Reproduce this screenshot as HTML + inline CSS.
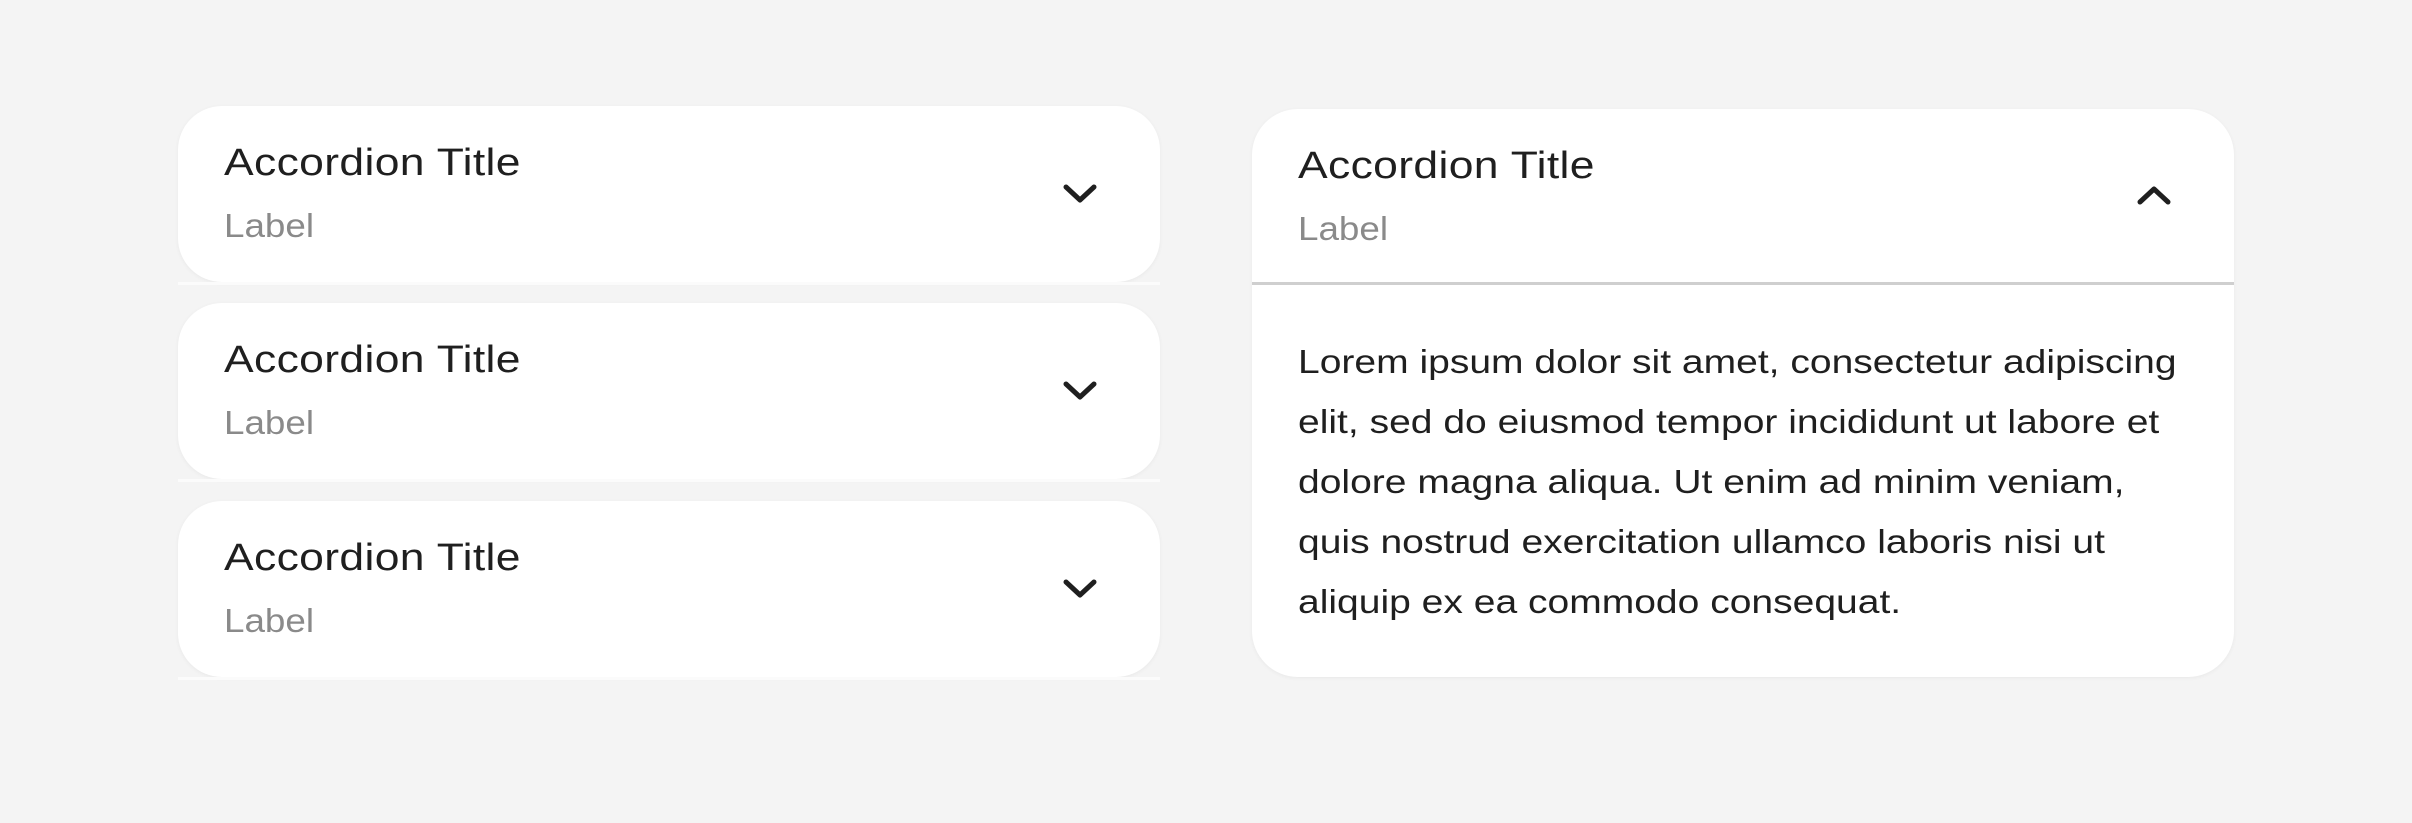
<!DOCTYPE html>
<html><head><style>
html,body{margin:0;padding:0;}
body{width:2412px;height:823px;background:#f4f4f4;position:relative;overflow:hidden;font-family:"Liberation Sans",sans-serif;color:#1f1f1f;}
.card{position:absolute;background:#fff;box-shadow:0 1px 4px rgba(0,0,0,0.05);}
.l{left:178px;width:982px;height:176px;border-radius:44px;}
.l::after{content:"";position:absolute;left:0;right:0;bottom:-3px;height:3px;background:#fbfbfb;}
.t{position:absolute;left:46px;top:36px;font-size:38px;letter-spacing:0.3px;white-space:nowrap;transform:scaleX(1.17);transform-origin:0 0;}
.lb{position:absolute;left:46px;top:101px;font-size:33px;color:#8a8a8a;white-space:nowrap;transform:scaleX(1.115);transform-origin:0 0;}
svg{position:absolute;}
.body{position:absolute;left:46px;top:224px;font-size:33.5px;line-height:60px;white-space:nowrap;transform:scaleX(1.165);transform-origin:0 0;}
</style></head><body>
<div class="card l" style="top:106px">
 <div class="t">Accordion Title</div>
 <div class="lb">Label</div>
 <svg style="left:884px;top:76px" width="36" height="24" viewBox="0 0 36 24"><path d="M4 5 L18 18 L32 5" fill="none" stroke="#1f1f1f" stroke-width="5" stroke-linecap="round" stroke-linejoin="round"/></svg>
</div>
<div class="card l" style="top:303px">
 <div class="t">Accordion Title</div>
 <div class="lb">Label</div>
 <svg style="left:884px;top:76px" width="36" height="24" viewBox="0 0 36 24"><path d="M4 5 L18 18 L32 5" fill="none" stroke="#1f1f1f" stroke-width="5" stroke-linecap="round" stroke-linejoin="round"/></svg>
</div>
<div class="card l" style="top:501px">
 <div class="t">Accordion Title</div>
 <div class="lb">Label</div>
 <svg style="left:884px;top:76px" width="36" height="24" viewBox="0 0 36 24"><path d="M4 5 L18 18 L32 5" fill="none" stroke="#1f1f1f" stroke-width="5" stroke-linecap="round" stroke-linejoin="round"/></svg>
</div>
<div class="card" style="left:1252px;top:109px;width:982px;height:568px;border-radius:46px;overflow:hidden">
 <div class="t">Accordion Title</div>
 <div class="lb">Label</div>
 <svg style="left:884px;top:74px" width="36" height="24" viewBox="0 0 36 24"><path d="M4 19 L18 6 L32 19" fill="none" stroke="#1f1f1f" stroke-width="5" stroke-linecap="round" stroke-linejoin="round"/></svg>
 <div style="position:absolute;left:0;right:0;top:173px;height:3px;background:#cfcfcf"></div>
 <div class="body">Lorem ipsum dolor sit amet, consectetur adipiscing<br>elit, sed do eiusmod tempor incididunt ut labore et<br>dolore magna aliqua. Ut enim ad minim veniam,<br>quis nostrud exercitation ullamco laboris nisi ut<br>aliquip ex ea commodo consequat.</div>
</div>
</body></html>
